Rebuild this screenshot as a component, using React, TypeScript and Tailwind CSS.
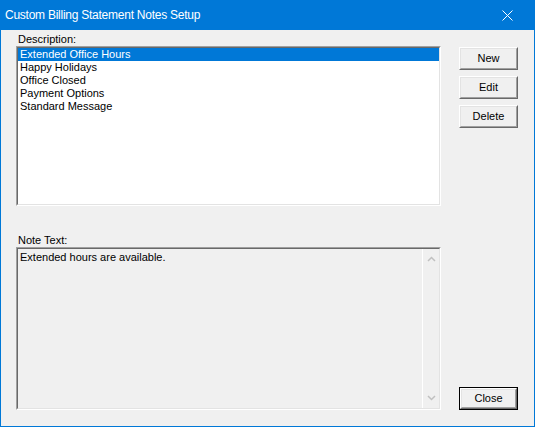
import React from 'react';

const items = [
  'Extended Office Hours',
  'Happy Holidays',
  'Office Closed',
  'Payment Options',
  'Standard Message',
];

function Sunken({ className, children }: { className: string; children: React.ReactNode }) {
  return (
    <div className={`border border-t-[#a0a0a0] border-l-[#a0a0a0] border-b-white border-r-white ${className}`}>
      <div className="h-full w-full border border-t-[#696969] border-l-[#696969] border-b-[#e3e3e3] border-r-[#e3e3e3]">
        {children}
      </div>
    </div>
  );
}

function Button({ label, isDefault }: { label: string; isDefault?: boolean }) {
  const face = (
    <div className="h-full w-full border border-t-white border-l-white border-b-[#696969] border-r-[#696969]">
      <div className="flex h-full w-full items-center justify-center border border-t-[#e3e3e3] border-l-[#e3e3e3] border-b-[#a0a0a0] border-r-[#a0a0a0] bg-[#f0f0f0] text-[11px] text-black">
        {label}
      </div>
    </div>
  );
  if (isDefault) {
    return <div className="h-[23px] w-[59px] border border-black">{face}</div>;
  }
  return <div className="h-[23px] w-[59px]">{face}</div>;
}

export default function App() {
  return (
    <div
      className="flex h-[427px] w-[535px] flex-col bg-[#0078d7]"
      style={{ fontFamily: '"Liberation Sans", Arial, sans-serif' }}
    >
      {/* Title bar */}
      <div className="flex h-[30px] items-center justify-between pl-[5px] pr-[22px] text-white">
        <span className="text-[12px] tracking-[-0.25px]">Custom Billing Statement Notes Setup</span>
        <svg width="11" height="11" viewBox="0 0 11 11" fill="none" stroke="white" strokeWidth="1">
          <path d="M0.5 0.5L10.5 10.5M10.5 0.5L0.5 10.5" />
        </svg>
      </div>

      {/* Body */}
      <div className="mx-[1px] mb-[1px] flex flex-1 gap-[18px] bg-[#f0f0f0] pl-[15px] pt-[3px]">
        <div className="flex w-[425px] flex-col">
          <div className="h-[13px] pl-[2px] text-[11px] leading-[13px] text-black">Description:</div>
          <Sunken className="h-[160px] bg-white">
            <div className="flex flex-col">
              {items.map((it, i) => (
                <div
                  key={it}
                  className={`h-[13px] pl-[2px] text-[11px] leading-[13px] ${
                    i === 0 ? 'bg-[#0078d7] text-white' : 'text-black'
                  }`}
                >
                  {it}
                </div>
              ))}
            </div>
          </Sunken>
          <div className="mt-[28px] h-[13px] pl-[2px] text-[11px] leading-[13px] text-black">Note Text:</div>
          <Sunken className="h-[163px] bg-[#f0f0f0]">
            <div className="flex h-full">
              <div className="flex-1 pl-[2px] pt-[2px] text-[11px] leading-[13px] text-black">
                Extended hours are available.
              </div>
              <div className="flex w-[17px] flex-col items-center justify-between border-l border-white py-[7px]">
                <svg width="9" height="6" viewBox="0 0 9 6" fill="none" stroke="#c0c0c0" strokeWidth="1.5">
                  <path d="M1 5L4.5 1.5L8 5" />
                </svg>
                <svg width="9" height="6" viewBox="0 0 9 6" fill="none" stroke="#c0c0c0" strokeWidth="1.5">
                  <path d="M1 1L4.5 4.5L8 1" />
                </svg>
              </div>
            </div>
          </Sunken>
        </div>

        <div className="flex flex-col pt-[14px] pb-[16px]">
          <div className="flex flex-col gap-[6px]">
            <Button label="New" />
            <Button label="Edit" />
            <Button label="Delete" />
          </div>
          <div className="mt-auto">
            <Button label="Close" isDefault />
          </div>
        </div>
      </div>
    </div>
  );
}
